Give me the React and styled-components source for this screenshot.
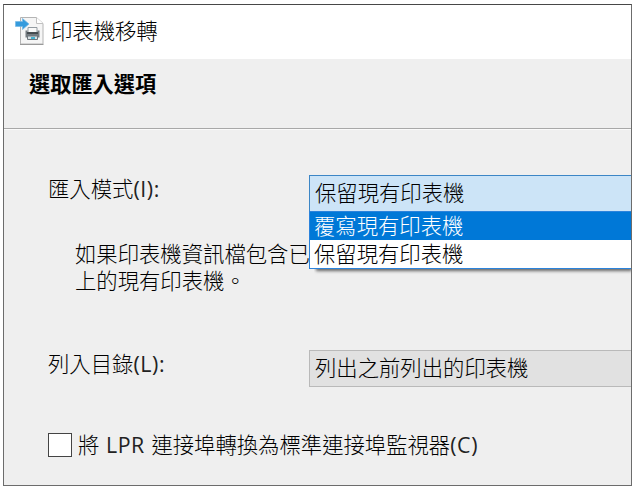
import React from 'react';
import styled, { createGlobalStyle } from 'styled-components';

const GlobalStyle = createGlobalStyle`
  body {
    margin: 0;
    background-color: #fff;
    overflow: hidden;
  }

  * {
    box-sizing: border-box;
  }
`;

const Page = styled.div`
  height: 490px;
  padding: 4px 8px 4px 3px;
  font-family: 'Open Sans', 'Noto Sans CJK TC', sans-serif;
  font-size: 21.35px;
  font-weight: 300;
  line-height: 27px;
  color: #000;
  white-space: nowrap;
`;

const Dialog = styled.div`
  height: 482px;
  border: 1px solid #6c6c6c;
  border-top-color: #484848;
  background-color: #efefef;
`;

const TitleBar = styled.header`
  display: flex;
  align-items: center;
  height: 54px;
  padding: 0 0 2px 11px;
  background-color: #fff;
`;

const Title = styled.span`
  margin: -1px 0 0 6px;
`;

const Header = styled.div`
  height: 70px;
  padding: 11px 0 0 25px;
  border-bottom: 1px solid #a8a8a8;
  box-shadow: 0 1px 0 #fafafa;
`;

const Heading = styled.h1`
  margin: 0;
  font-size: 21.2px;
  font-weight: 700;
`;

const Form = styled.main`
  padding: 46px 0 0 44px;
`;

const Field = styled.div`
  display: flex;
  align-items: flex-start;
  height: 37px;
`;

const Label = styled.label`
  flex: none;
  width: 261px;
`;

const Latin = styled.span`
  font-weight: 400;
  letter-spacing: 0.6px;
  color: #222;
`;

const SelectBox = styled.div`
  position: relative;
  flex: 1;
  height: 37px;
  padding: 3px 0 0 5px;
  border: 1px solid ${(props) => (props.$open ? '#3c86c6' : '#b9b9b9')};
  border-right: 0;
  background-color: ${(props) => (props.$open ? '#cce4f7' : '#e1e1e1')};
`;

const OptionList = styled.ul`
  position: absolute;
  top: 35px;
  left: -1px;
  right: 0;
  z-index: 1;
  margin: 0;
  padding: 0;
  list-style: none;
  border: 1px solid #2b83dc;
  border-right: 0;
  background-color: #fff;
`;

const ListShadow = styled.div`
  position: absolute;
  top: 40px;
  left: 7px;
  right: 0;
  height: 53px;
  box-shadow: 0 1px 3px 1px #666;
  clip-path: inset(0 0 -6px -3px);
`;

const Option = styled.li`
  height: 28px;
  padding-left: 4px;
  color: ${(props) => (props.$selected ? '#fff' : '#000')};
  background-color: ${(props) => (props.$selected ? '#0078d7' : '#fff')};
`;

const Description = styled.p`
  margin: 28px 0 56px;
  padding-left: 27px;
`;

const CheckRow = styled.label`
  display: flex;
  align-items: center;
  margin-top: 45px;
  word-spacing: 1px;
`;

const CheckBox = styled.span`
  width: 24px;
  height: 24px;
  margin-right: 6px;
  border: 1px solid #444;
  background-color: #fff;
`;

const CheckText = styled.span`
  margin-top: -1px;
`;

const PrinterIcon = () => (
  <svg width="30" height="30" viewBox="0 0 30 30" fill="none">
    <path d="M5.5 1.5h16l6.5 6v20.5H5.5z" fill="#f5f5f5" stroke="#b4b4b4" />
    <path d="M21.5 1.5v6H28" fill="#fff" stroke="#c0c0c0" />
    <path d="M5 28.5h23.5" stroke="#999" />
    <path d="M13 11.5h9v5h-9z" fill="#f8f8f8" stroke="#939ba1" />
    <path d="M10.5 14.5h2v2h10v-2h2v7h-14z" fill="#747b80" />
    <path d="M12 17h11" stroke="#343a3e" strokeWidth="1.5" />
    <path d="M12.5 20h10v3.5h-10z" fill="#d8e0e4" stroke="#6e777d" />
    <path d="M16 22h4" stroke="#16a5cb" strokeWidth="1.5" />
    <path d="M.5 5.5h7V2.5L14 8l-6.5 5.5v-3h-7z" fill="#359bdd" stroke="#75b9e5" strokeWidth=".7" />
  </svg>
);

const App = () => {
  return (
    <Page>
      <GlobalStyle />
      <Dialog>
        <TitleBar>
          <PrinterIcon />
          <Title>印表機移轉</Title>
        </TitleBar>

        <Header>
          <Heading>選取匯入選項</Heading>
        </Header>

        <Form>
          <Field>
            <Label>匯入模式<Latin>(I):</Latin></Label>
            <SelectBox $open>
              保留現有印表機
              <ListShadow />
              <OptionList>
                <Option $selected>覆寫現有印表機</Option>
                <Option>保留現有印表機</Option>
              </OptionList>
            </SelectBox>
          </Field>

          <Description>
            如果印表機資訊檔包含已
            <br />
            上的現有印表機。
          </Description>

          <Field>
            <Label>列入目錄<Latin>(L):</Latin></Label>
            <SelectBox>列出之前列出的印表機</SelectBox>
          </Field>

          <CheckRow>
            <CheckBox />
            <CheckText>
              將 <Latin>LPR</Latin> 連接埠轉換為標準連接埠監視器<Latin>(C)</Latin>
            </CheckText>
          </CheckRow>
        </Form>
      </Dialog>
    </Page>
  );
};

export default App;
